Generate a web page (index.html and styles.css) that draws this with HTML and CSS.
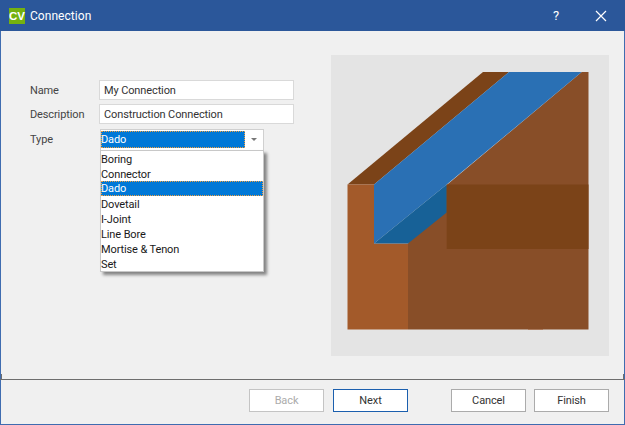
FILE: index.html
```html
<!DOCTYPE html>
<html lang="en">
<head>
    <meta charset="UTF-8">
    <title>Connection</title>
    <link rel="stylesheet" href="styles.css">
</head>

<body>

<div class="window">

    <!-- Title bar -->
    <div class="titlebar">
        <span class="app-icon">CV</span>
        <span class="title">Connection</span>
        <span class="help">?</span>
        <svg class="close" width="12" height="12" viewBox="0 0 12 12">
            <path d="M1 1 L11 11 M11 1 L1 11" stroke="#ffffff" stroke-width="1.2" fill="none"/>
        </svg>
    </div>

    <!-- Form and preview -->
    <div class="content">
        <form class="fields">
            <label for="name">Name</label>
            <input type="text" id="name" value="My Connection">

            <label for="description">Description</label>
            <input type="text" id="description" value="Construction Connection">

            <label class="type-label">Type</label>
            <div class="combo">
                <div class="combo-box">
                    <span class="combo-value">Dado</span>
                    <span class="combo-arrow"></span>
                </div>
                <ul class="combo-list">
                    <li>Boring</li>
                    <li>Connector</li>
                    <li class="selected">Dado</li>
                    <li>Dovetail</li>
                    <li>I-Joint</li>
                    <li>Line Bore</li>
                    <li>Mortise &amp; Tenon</li>
                    <li>Set</li>
                </ul>
            </div>
        </form>

        <div class="preview">
            <svg width="278" height="301" viewBox="331 55 278 301">
                <!-- top strip -->
                <polygon points="347.5,184.5 483,72 509,72 374,184.5" fill="#7b4318"/>
                <!-- side face -->
                <polygon points="581.7,72 588.5,72 588.5,329.5 408,329.5 408,243.5 446.7,185" fill="#884e28"/>
                <rect x="528" y="329" width="15" height="1" fill="#a9785a"/>
                <!-- front face -->
                <polygon points="347.5,184.5 374,184.5 374,243.5 408,243.5 408,329.5 347.5,329.5" fill="#a35a2a"/>
                <!-- dado channel -->
                <polygon points="374,184.5 509,72 581.7,72 446.7,184.5 374,243.5" fill="#2a70b4"/>
                <polygon points="374,243.5 446.7,184.5 446.7,212.5 408,243.5" fill="#176197"/>
                <!-- far pocket -->
                <rect x="446.7" y="184.5" width="141.8" height="64.5" fill="#7b4318"/>
            </svg>
        </div>
    </div>

    <!-- Bottom buttons -->
    <div class="footer">
        <button type="button" disabled>Back</button>
        <button type="button" class="primary">Next</button>
        <button type="button" class="cancel">Cancel</button>
        <button type="button">Finish</button>
    </div>

</div>

</body>
</html>
```

FILE: styles.css
```css
/* Page styling */
html, body {
    margin: 0;
    padding: 0;
}

body {
    width: 625px;
    height: 425px;
    overflow: hidden;
    font-family: 'Roboto', 'Noto Sans', sans-serif;
    font-size: 11px;
    letter-spacing: -0.12px;
    color: #333333;
}

/* Window frame */
.window {
    width: 625px;
    height: 425px;
    box-sizing: border-box;
    display: flex;
    flex-direction: column;
    border: 1px solid #3f6cb0;
    border-top: 0;
    background-color: #F0F0F0;
}

/* Title bar */
.titlebar {
    height: 31px;
    flex: none;
    display: flex;
    align-items: center;
    margin: 0 -1px;
    padding-left: 9px;
    background-color: #2B579A;
    color: #FFFFFF;
}

.app-icon {
    width: 16px;
    height: 16px;
    margin-right: 5px;
    background-color: #75B10F;
    font-family: 'Liberation Sans', sans-serif;
    font-size: 11.5px;
    font-weight: bold;
    line-height: 16px;
    text-align: center;
    letter-spacing: 0;
}

.title {
    flex: 1;
    font-size: 12px;
    letter-spacing: 0.05px;
}

.help {
    margin-right: 36px;
    font-size: 13px;
}

.close {
    margin-right: 18px;
}

/* Main area */
.content {
    height: 348px;
    flex: none;
    display: flex;
    justify-content: space-between;
    padding: 24px 15px 0 29px;
    box-sizing: border-box;
}

/* Form fields */
.fields {
    display: grid;
    grid-template-columns: 69px 195px;
    grid-auto-rows: 20px;
    row-gap: 4px;
    margin-top: 25px;
    align-items: center;
}

label {
    color: #444444;
}

.type-label {
    padding-top: 2px;
}

input[type="text"] {
    width: 195px;
    height: 20px;
    box-sizing: border-box;
    padding: 0 4px;
    border: 1px solid #D9D9D9;
    background-color: #FFFFFF;
    font-family: inherit;
    font-size: inherit;
    letter-spacing: inherit;
    color: #333333;
}

/* Combo box */
.combo {
    position: relative;
    width: 164px;
    height: 22px;
    margin: 1px 0 0 1px;
    align-self: start;
}

.combo-box {
    height: 22px;
    box-sizing: border-box;
    display: flex;
    padding: 1px 0 0 0;
    border: 1px solid #D0D0D0;
    background-color: #FFFFFF;
}

.combo-value {
    width: 144px;
    height: 17px;
    box-sizing: border-box;
    outline: 1px dotted #F0A040;
    outline-offset: -1px;
    background-color: #0078D7;
    color: #FFFFFF;
    line-height: 18px;
}

.combo-arrow {
    width: 0;
    height: 0;
    margin: 7px 0 0 6px;
    border-left: 3px solid transparent;
    border-right: 3px solid transparent;
    border-top: 3px solid #777777;
}

.combo-list {
    position: absolute;
    top: 21px;
    left: 0;
    width: 164px;
    height: 122px;
    box-sizing: border-box;
    margin: 0;
    padding: 0;
    list-style: none;
    border: 1px solid #C8C8C8;
    background-color: #FFFFFF;
    box-shadow: 3px 3px 3px rgba(0,0,0,0.45);
    color: #1A1A1A;
}

.combo-list li {
    height: 15px;
    line-height: 17px;
}

.combo-list .selected {
    outline: 1px dotted #F0A040;
    outline-offset: -1px;
    background-color: #0078D7;
    color: #FFFFFF;
    line-height: 15px;
}

/* Preview image */
.preview {
    width: 278px;
    height: 301px;
    background-color: #E4E4E4;
}

.preview svg {
    display: block;
}

/* Footer with buttons */
.footer {
    position: relative;
    flex: 1;
    display: flex;
    margin: 0 -1px;
    padding: 9px 15px 0 249px;
    border-top: 1px solid #6D6D6D;
}

/* Small ticks where the separator meets the frame */
.footer::before,
.footer::after {
    content: "";
    position: absolute;
    top: -6px;
    width: 1px;
    height: 5px;
    background-color: #6D6D6D;
}

.footer::before {
    left: 1px;
}

.footer::after {
    right: 1px;
}

button {
    width: 75px;
    height: 23px;
    margin-right: 9px;
    padding: 0;
    border: 1px solid #ABABAB;
    background-color: #FFFFFF;
    font-family: inherit;
    font-size: inherit;
    letter-spacing: inherit;
    color: #333333;
}

button:disabled {
    border-color: #C4C4C4;
    color: #ABABAB;
}

button.primary {
    border-color: #1B5FAE;
}

button.cancel {
    margin-left: 34px;
    margin-right: 8px;
}

button:last-child {
    margin-right: 0;
}
```
